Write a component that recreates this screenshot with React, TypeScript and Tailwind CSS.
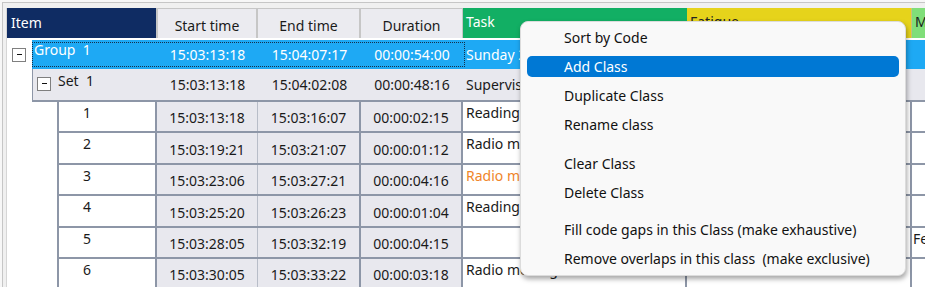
import React from "react";

type Row = {
  n: string;
  start: string;
  end: string;
  dur: string;
  task: string;
  orange?: boolean;
  last?: string;
  h: string;
};

const rows: Row[] = [
  { n: "1", start: "15:03:13:18", end: "15:03:16:07", dur: "00:00:02:15", task: "Reading aloud", h: "h-[31px]" },
  { n: "2", start: "15:03:19:21", end: "15:03:21:07", dur: "00:00:01:12", task: "Radio message", h: "h-[32px]" },
  { n: "3", start: "15:03:23:06", end: "15:03:27:21", dur: "00:00:04:16", task: "Radio message", orange: true, h: "h-[31px]" },
  { n: "4", start: "15:03:25:20", end: "15:03:26:23", dur: "00:00:01:04", task: "Reading aloud", h: "h-[32px]" },
  { n: "5", start: "15:03:28:05", end: "15:03:32:19", dur: "00:00:04:15", task: "", last: "Fear", h: "h-[31px]" },
  { n: "6", start: "15:03:30:05", end: "15:03:33:22", dur: "00:00:03:18", task: "Radio message", h: "h-[31px]" },
];

const menu = [
  ["Sort by Code", "Add Class", "Duplicate Class", "Rename class"],
  ["Clear Class", "Delete Class"],
  ["Fill code gaps in this Class (make exhaustive)", "Remove overlaps in this class  (make exclusive)"],
];

function ToggleBox() {
  return (
    <span className="flex h-[14px] w-[14px] shrink-0 items-center justify-center border border-[#7f7f7f] bg-white">
      <span className="ml-[1px] mb-[2px] h-[1px] w-[5px] bg-[#111]" />
    </span>
  );
}

function ContextMenu() {
  return (
    <div className="absolute left-[520px] top-[21px] z-10 h-[255px] w-[386px] rounded-[8px] border border-[#dcdcdc] bg-[#f9f9f9] px-[6px] pt-[1px] text-[#111] shadow-[1px_3px_5px_rgba(0,0,0,0.35)]">
      {menu.map((group, gi) => (
        <div key={gi} className={gi === 1 ? "mt-[10px]" : gi === 2 ? "mt-[8px]" : ""}>
          {group.map((label) => (
            <div key={label} className="flex h-[29px] items-center">
              <div
                className={`flex h-[21px] w-full items-center whitespace-pre rounded-[5px] pl-[37px] leading-[19px] ${
                  label === "Add Class" ? "bg-[#0078d4] text-white" : ""
                }`}
              >
                {label}
              </div>
            </div>
          ))}
        </div>
      ))}
    </div>
  );
}

export default function App() {
  return (
    <div className="relative h-[287px] w-[925px] overflow-hidden bg-[#f7f7f7] font-['Noto_Sans',sans-serif] text-[14px] leading-[19px] text-[#1a1a1a]">
      <div className="ml-[2px] mt-[2px] h-full border-l border-t border-[#c6c6c6] bg-[#f0f0f0] pl-[3px] pt-[5px]">
        <div className="h-full overflow-hidden border-l border-[#d6d6d6] bg-white">
          {/* header */}
          <div className="flex h-[30px]">
            <div className="w-[149px] shrink-0 bg-[#0f2c63] pl-[4px] pt-[5px] text-white">Item</div>
            <div className="flex w-[102px] shrink-0 items-center justify-center border-x-2 border-t border-[#c6c6c6] bg-[#ebebf0] pt-[4px]">Start time</div>
            <div className="flex w-[103px] shrink-0 items-center justify-center border-r-2 border-t border-[#c6c6c6] bg-[#ebebf0] pt-[4px]">End time</div>
            <div className="flex w-[102px] shrink-0 items-center justify-center border-r border-t border-[#c6c6c6] bg-[#ebebf0] pt-[4px]">Duration</div>
            <div className="w-[224px] shrink-0 bg-[#12af64] pl-[3px] pt-[4px] text-white">Task</div>
            <div className="w-[225px] shrink-0 border-r border-[#c9c27a] bg-[#e6d31b] pl-[3px] pt-[4px] text-[#222]">Fatigue</div>
            <div className="min-w-0 flex-1 bg-[#80de79] pl-[3px] pt-[4px]">M</div>
          </div>

          {/* group row */}
          <div className="flex h-[31px]">
            <div className="flex w-[25px] shrink-0 items-center pl-[5px] pt-[3px]">
              <ToggleBox />
            </div>
            <div className="min-w-0 flex-1 pt-[2px]">
              <div className="relative flex h-full bg-[#1ea9f4] text-white">
                <div className="w-[125px] shrink-0 whitespace-pre pl-[2px]">Group  1</div>
                <div className="flex w-[101px] shrink-0 items-center justify-center">15:03:13:18</div>
                <div className="flex w-[103px] shrink-0 items-center justify-center">15:04:07:17</div>
                <div className="flex w-[102px] shrink-0 items-center justify-center">00:00:54:00</div>
                <div className="flex w-[224px] shrink-0 items-center overflow-hidden whitespace-nowrap pl-[3px]">Sunday 2 March</div>
                <div className="w-[225px] shrink-0" />
                <div className="min-w-0 flex-1" />
                <div className="absolute left-0 top-[2px] h-[25px] w-[433px] border border-dotted border-[#163049]" />
              </div>
            </div>
          </div>

          {/* set row */}
          <div className="flex h-[33px]">
            <div className="w-[25px] shrink-0" />
            <div className="flex min-w-0 flex-1 border-b-2 border-l border-[#8d96a7] bg-[#e8e8ee]">
              <div className="flex w-[124px] shrink-0 items-start pl-[4px] pt-[8px]">
                <ToggleBox />
                <span className="-mt-[6px] ml-[7px] whitespace-pre">Set  1</span>
              </div>
              <div className="flex w-[101px] shrink-0 items-center justify-center">15:03:13:18</div>
              <div className="flex w-[103px] shrink-0 items-center justify-center">15:04:02:08</div>
              <div className="flex w-[102px] shrink-0 items-center justify-center">00:00:48:16</div>
              <div className="flex w-[224px] shrink-0 items-center overflow-hidden whitespace-nowrap pl-[3px]">Supervision</div>
              <div className="w-[225px] shrink-0" />
              <div className="min-w-0 flex-1" />
            </div>
          </div>

          {/* data rows */}
          {rows.map((r) => (
            <div key={r.n} className={`flex ${r.h}`}>
              <div className="w-[50px] shrink-0" />
              <div className="flex min-w-0 flex-1 border-b-2 border-[#8d96a7]">
                <div className="w-[100px] shrink-0 border-x-2 border-[#8d96a7] bg-white pl-[24px] pt-[1px]">{r.n}</div>
                <div className="flex w-[101px] shrink-0 items-center justify-center border-r border-[#b8bdc8] bg-[#e8e8ee] pt-[2px]">{r.start}</div>
                <div className="flex w-[103px] shrink-0 items-center justify-center border-r-2 border-[#8d96a7] bg-[#e8e8ee] pt-[2px]">{r.end}</div>
                <div className="flex w-[102px] shrink-0 items-center justify-center border-r-2 border-[#8d96a7] bg-[#e8e8ee] pt-[2px]">{r.dur}</div>
                <div
                  className={`w-[224px] shrink-0 overflow-hidden whitespace-nowrap border-r-2 border-[#8d96a7] bg-white pl-[3px] pt-[1px] ${
                    r.orange ? "text-[#f0852a]" : ""
                  }`}
                >
                  {r.task}
                </div>
                <div className="w-[225px] shrink-0 border-r-2 border-[#8d96a7] bg-white" />
                <div className="min-w-0 flex-1 overflow-hidden whitespace-nowrap bg-white pl-[1px] pt-[1px]">{r.last ?? ""}</div>
              </div>
            </div>
          ))}
        </div>
      </div>

      <ContextMenu />
    </div>
  );
}
